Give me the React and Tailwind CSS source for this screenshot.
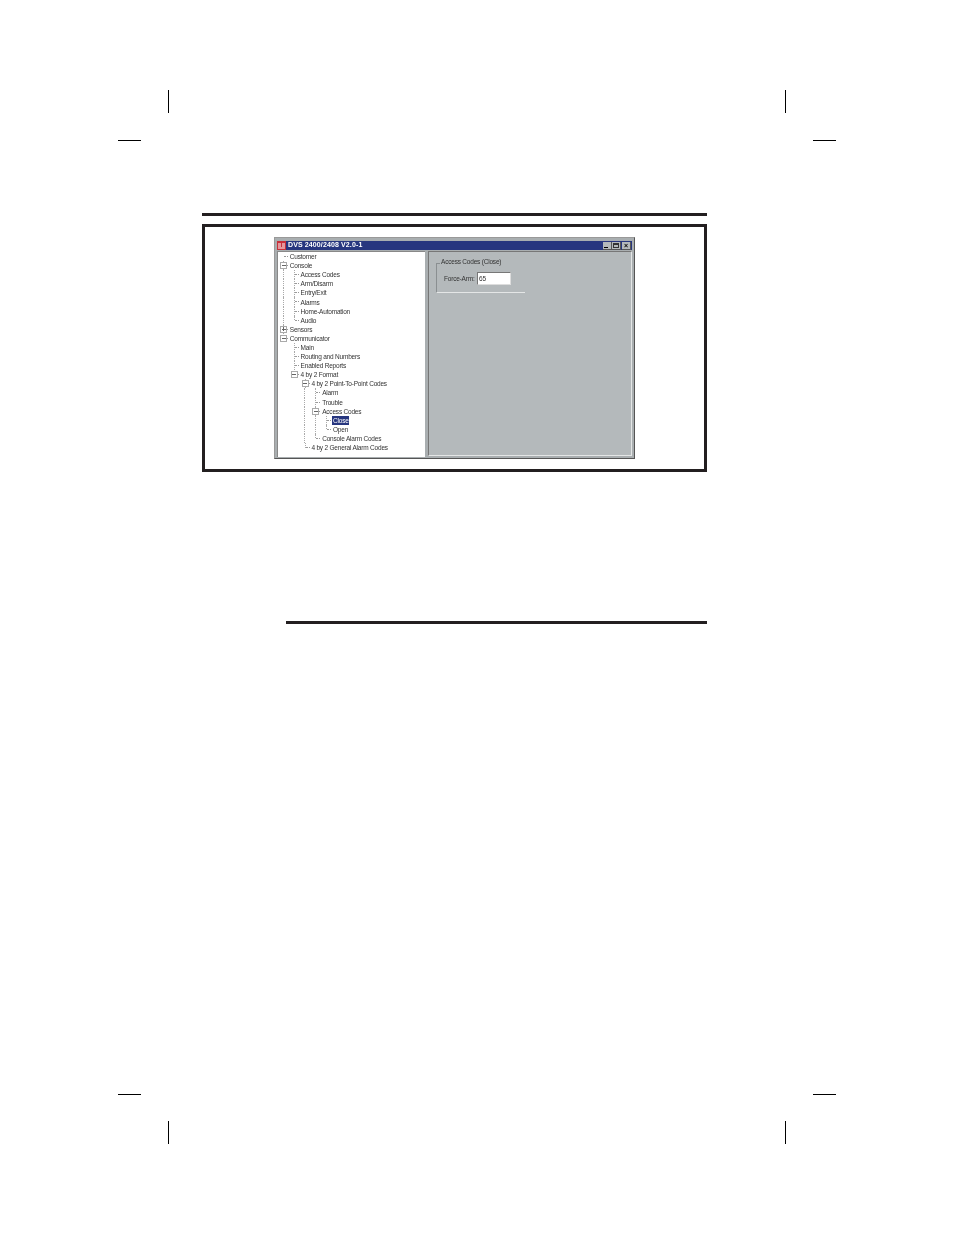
const tree = [
  { guides: [], kind: "leaf", label: "Customer", first: true },
  { guides: [], kind: "minus", label: "Console" },
  { guides: [1], kind: "leaf", label: "Access Codes" },
  { guides: [1], kind: "leaf", label: "Arm/Disarm" },
  { guides: [1], kind: "leaf", label: "Entry/Exit" },
  { guides: [1], kind: "leaf", label: "Alarms" },
  { guides: [1], kind: "leaf", label: "Home-Automation" },
  { guides: [1], kind: "last", label: "Audio" },
  { guides: [], kind: "plus", label: "Sensors" },
  { guides: [], kind: "minus", label: "Communicator", end: true },
  { guides: [0], kind: "leaf", label: "Main" },
  { guides: [0], kind: "leaf", label: "Routing and Numbers" },
  { guides: [0], kind: "leaf", label: "Enabled Reports" },
  { guides: [0], kind: "minus", label: "4 by 2 Format", end: true },
  { guides: [0, 0], kind: "minus", label: "4 by 2 Point-To-Point Codes" },
  { guides: [0, 0, 1], kind: "leaf", label: "Alarm" },
  { guides: [0, 0, 1], kind: "leaf", label: "Trouble" },
  { guides: [0, 0, 1], kind: "minus", label: "Access Codes" },
  { guides: [0, 0, 1, 1], kind: "leaf", label: "Close", selected: true },
  { guides: [0, 0, 1, 1], kind: "last", label: "Open" },
  { guides: [0, 0, 1], kind: "last", label: "Console Alarm Codes" },
  { guides: [0, 0], kind: "last", label: "4 by 2 General Alarm Codes" },
];

function Guide({ on }) {
  return (
    <div className="w-[10.8px] h-full shrink-0 flex justify-center">
      {on ? <div className="h-full border-l border-dotted border-[#aaa]" /> : null}
    </div>
  );
}

function Connector({ kind, first, end }) {
  const box = kind === "plus" || kind === "minus";
  const fullV = kind === "leaf" || box;
  return (
    <div className="relative w-[10.8px] h-full shrink-0">
      {!end && (
        <div
          className={`absolute left-[5px] top-0 border-l border-dotted border-[#aaa] ${fullV && !first ? "h-full" : first ? "h-0" : "h-1/2"}`}
        />
      )}
      <div className="absolute left-[6px] top-[4px] w-[4px] border-t border-dotted border-[#999]" />
      {box && (
        <div className="absolute left-[2px] top-[1px] w-[7px] h-[7px] bg-white border border-[#aaa] flex items-center justify-center">
          <div className="w-[4px] h-px bg-[#666]" />
          {kind === "plus" && <div className="absolute w-px h-[4px] bg-[#666]" />}
        </div>
      )}
    </div>
  );
}

function Row({ r }) {
  return (
    <div className="h-[9.1px] flex items-center">
      {r.guides.map((g, i) => (
        <Guide key={i} on={g} />
      ))}
      <Connector kind={r.kind} first={r.first} end={r.end} />
      <span
        className={`ml-[0.5px] px-[0.5px] leading-[9px] whitespace-nowrap ${r.selected ? "bg-[#27367f] text-white" : "text-[#333]"}`}
      >
        {r.label}
      </span>
    </div>
  );
}

function CropRow({ kind }) {
  return kind === "v" ? (
    <div className="flex justify-between pl-[168px] pr-[168px]">
      <div className="w-px h-[23px] bg-black" />
      <div className="w-px h-[23px] bg-black" />
    </div>
  ) : (
    <div className="flex justify-between pl-[118px] pr-[118px]">
      <div className="w-[23px] h-px bg-black" />
      <div className="w-[23px] h-px bg-black" />
    </div>
  );
}

export default function App() {
  return (
    <div className="w-[954px] h-[1235px] bg-white flex flex-col overflow-hidden font-['Liberation_Sans',Arial,sans-serif]">
      <div className="pt-[90px]">
        <CropRow kind="v" />
      </div>
      <div className="mt-[27px]">
        <CropRow kind="h" />
      </div>

      <div className="mt-[72px] ml-[202px] w-[505px]">
        <div className="h-[3px] bg-[#231f20]" />
        <div className="mt-[8px] h-[248px] border-[3px] border-[#231f20] flex justify-center pt-[10px]">
          <div className="w-[361px] h-[222px] bg-[#a9aeb0] border border-[#555] border-t-[#999] border-l-[#999] p-[2px] flex flex-col blur-[0.35px]">
            <div className="h-[9px] mt-[1px] bg-[#27367f] flex items-center pl-[0px] pr-[1px] shrink-0">
              <svg width="9" height="9" viewBox="0 0 9 9" className="shrink-0">
                <rect width="9" height="9" fill="#c8303a" />
                <path d="M1 3h3M5 3h3M1 5h3M5 5h3M1 7h7" stroke="#fff" strokeWidth="1" />
              </svg>
              <span className="ml-[2px] text-[7px] font-bold text-white tracking-[0.12px] whitespace-nowrap">
                DVS 2400/2408 V2.0-1
              </span>
              <div className="ml-auto flex">
                <div className="w-[9px] h-[8px] bg-[#b4b9bb] border-r border-b border-[#555] relative flex items-end pl-[1px] pb-[1px]">
                  <div className="w-[4px] h-px bg-black" />
                </div>
                <div className="w-[9px] h-[8px] bg-[#b4b9bb] border-r border-b border-[#555] flex items-center justify-center">
                  <div className="w-[6px] h-[5px] border border-t-2 border-[#333]" />
                </div>
                <div className="ml-[1px] w-[9px] h-[8px] bg-[#b4b9bb] border-r border-b border-[#555] flex items-center justify-center text-[7px] leading-none font-bold text-black">
                  ×
                </div>
              </div>
            </div>

            <div className="flex-1 flex mt-[1px] min-h-0">
              <div className="w-[148px] h-[206px] bg-white border-l border-t border-[#888] text-[6.5px] tracking-[-0.2px]">
                {tree.map((r, i) => (
                  <Row key={i} r={r} />
                ))}
              </div>
              <div className="flex-1 ml-[3px] bg-[#b4b9bb] border-l border-t border-r border-b border-[#777] border-r-[#e4e6e6] border-b-[#e4e6e6] pl-[7px] pt-[11px] text-[6.5px] tracking-[-0.2px] text-[#333]">
                <div className="w-[89px] h-[30px] border-l border-b border-[#8a8f91] border-b-[#e4e6e6] relative">
                  <div className="w-[3px] border-t border-[#8a8f91]" />
                  <div className="absolute left-[4px] -top-[5px] leading-[7px] whitespace-nowrap">
                    Access Codes (Close)
                  </div>
                  <div className="flex items-center pl-[7px] mt-[8px]">
                    <span className="w-[33px] whitespace-nowrap">Force-Arm:</span>
                    <div className="w-[34px] h-[13px] bg-white border border-[#777] border-b-[#ddd] border-r-[#ddd] pl-[1px] leading-[11px]">
                      65
                    </div>
                  </div>
                </div>
              </div>
            </div>
          </div>
        </div>
      </div>

      <div className="mt-[149px] ml-[286px] w-[421px] h-[3px] bg-[#231f20]" />

      <div className="mt-auto">
        <CropRow kind="h" />
      </div>
      <div className="mt-[26px] pb-[91px]">
        <CropRow kind="v" />
      </div>
    </div>
  );
}
